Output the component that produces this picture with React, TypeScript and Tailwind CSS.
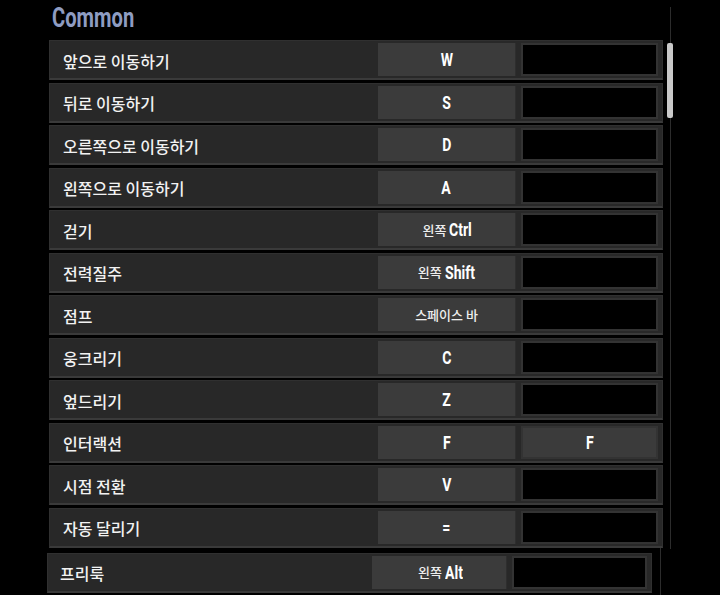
import React from 'react'

type Binding = { label: string; primary: React.ReactNode; secondary?: React.ReactNode }

const kr = '"Noto Sans CJK KR", "Noto Sans", sans-serif'
const keyFont = 'Roboto, "Noto Sans CJK KR", sans-serif'

function Key({ k }: { k: string }) {
  return (
    <span className="inline-block scale-x-[0.78] font-bold text-[18px] text-white" style={{ fontFamily: keyFont }}>
      {k}
    </span>
  )
}

function KrKey({ kr: prefix, k }: { kr: string; k: string }) {
  return (
    <span className="flex items-center gap-[3px]">
      <span className="text-[13px] font-medium text-[#eee]" style={{ fontFamily: kr }}>
        {prefix}
      </span>
      <span className="inline-block scale-x-[0.78] origin-left font-bold text-[18px] text-white -mr-[8px]" style={{ fontFamily: keyFont }}>
        {k}
      </span>
    </span>
  )
}

const bindings: Binding[] = [
  { label: '앞으로 이동하기', primary: <Key k="W" /> },
  { label: '뒤로 이동하기', primary: <Key k="S" /> },
  { label: '오른쪽으로 이동하기', primary: <Key k="D" /> },
  { label: '왼쪽으로 이동하기', primary: <Key k="A" /> },
  { label: '걷기', primary: <KrKey kr="왼쪽" k="Ctrl" /> },
  { label: '전력질주', primary: <KrKey kr="왼쪽" k="Shift" /> },
  {
    label: '점프',
    primary: (
      <span className="text-[13px] font-medium text-[#eee]" style={{ fontFamily: kr }}>
        스페이스 바
      </span>
    ),
  },
  { label: '웅크리기', primary: <Key k="C" /> },
  { label: '엎드리기', primary: <Key k="Z" /> },
  { label: '인터랙션', primary: <Key k="F" />, secondary: <Key k="F" /> },
  { label: '시점 전환', primary: <Key k="V" /> },
  { label: '자동 달리기', primary: <Key k="=" /> },
]

function Row({ b, compact }: { b: Binding; compact?: boolean }) {
  return (
    <div
      className={`flex items-center h-[40px] bg-[#282828] border border-[#303030] border-b-2 border-b-[#3a3a3a] ${
        compact ? 'w-[605px]' : 'w-[614px]'
      }`}
    >
      <div
        className={`flex-1 pt-[2px] text-[16px] font-medium text-[#f2f2f2] ${compact ? 'pl-[12px]' : 'pl-[13px]'}`}
        style={{ fontFamily: kr }}
      >
        {b.label}
      </div>
      <div className={`h-[33px] flex items-center justify-center bg-[#3b3b3b] border-r border-[#2e2e2e] ${compact ? 'w-[135px]' : 'w-[138px]'}`}>
        {b.primary}
      </div>
      <div
        className={`h-[33px] flex items-center justify-center border-2 border-[#333] ${
          compact ? 'w-[135px] ml-[5px] mr-[4px]' : 'w-[137px] ml-[5px] mr-[4px]'
        } ${b.secondary ? 'bg-[#3b3b3b]' : 'bg-black'}`}
      >
        {b.secondary}
      </div>
    </div>
  )
}

export default function App() {
  return (
    <div className="relative w-[720px] h-[595px] bg-black overflow-hidden">
      <div className="pl-[49px]">
        <div className="h-[40px] flex items-center">
          <span
            className="inline-block scale-x-[0.72] origin-left ml-[3px] -mt-[5px] text-[28px] font-bold text-[#8e9cc2]"
            style={{ fontFamily: 'Roboto, sans-serif' }}
          >
            Common
          </span>
        </div>
        <div className="flex flex-col gap-[2.5px]">
          {bindings.map((b) => (
            <Row key={b.label} b={b} />
          ))}
        </div>
        <div className="mt-[5px] -ml-[2px] flex">
          <Row b={{ label: '프리룩', primary: <KrKey kr="왼쪽" k="Alt" /> }} compact />
        </div>
      </div>
      {/* scrollbar */}
      <div className="absolute left-[670px] top-[7px] w-[1px] h-[542px] bg-[#2c2c2c]" />
      <div className="absolute left-[667px] top-[43px] w-[6px] h-[75px] rounded-[2px] bg-[#c9c9c9]" />
      <div className="absolute left-[660px] top-[548px] w-[1px] h-[47px] bg-[#2c2c2c]" />
    </div>
  )
}
